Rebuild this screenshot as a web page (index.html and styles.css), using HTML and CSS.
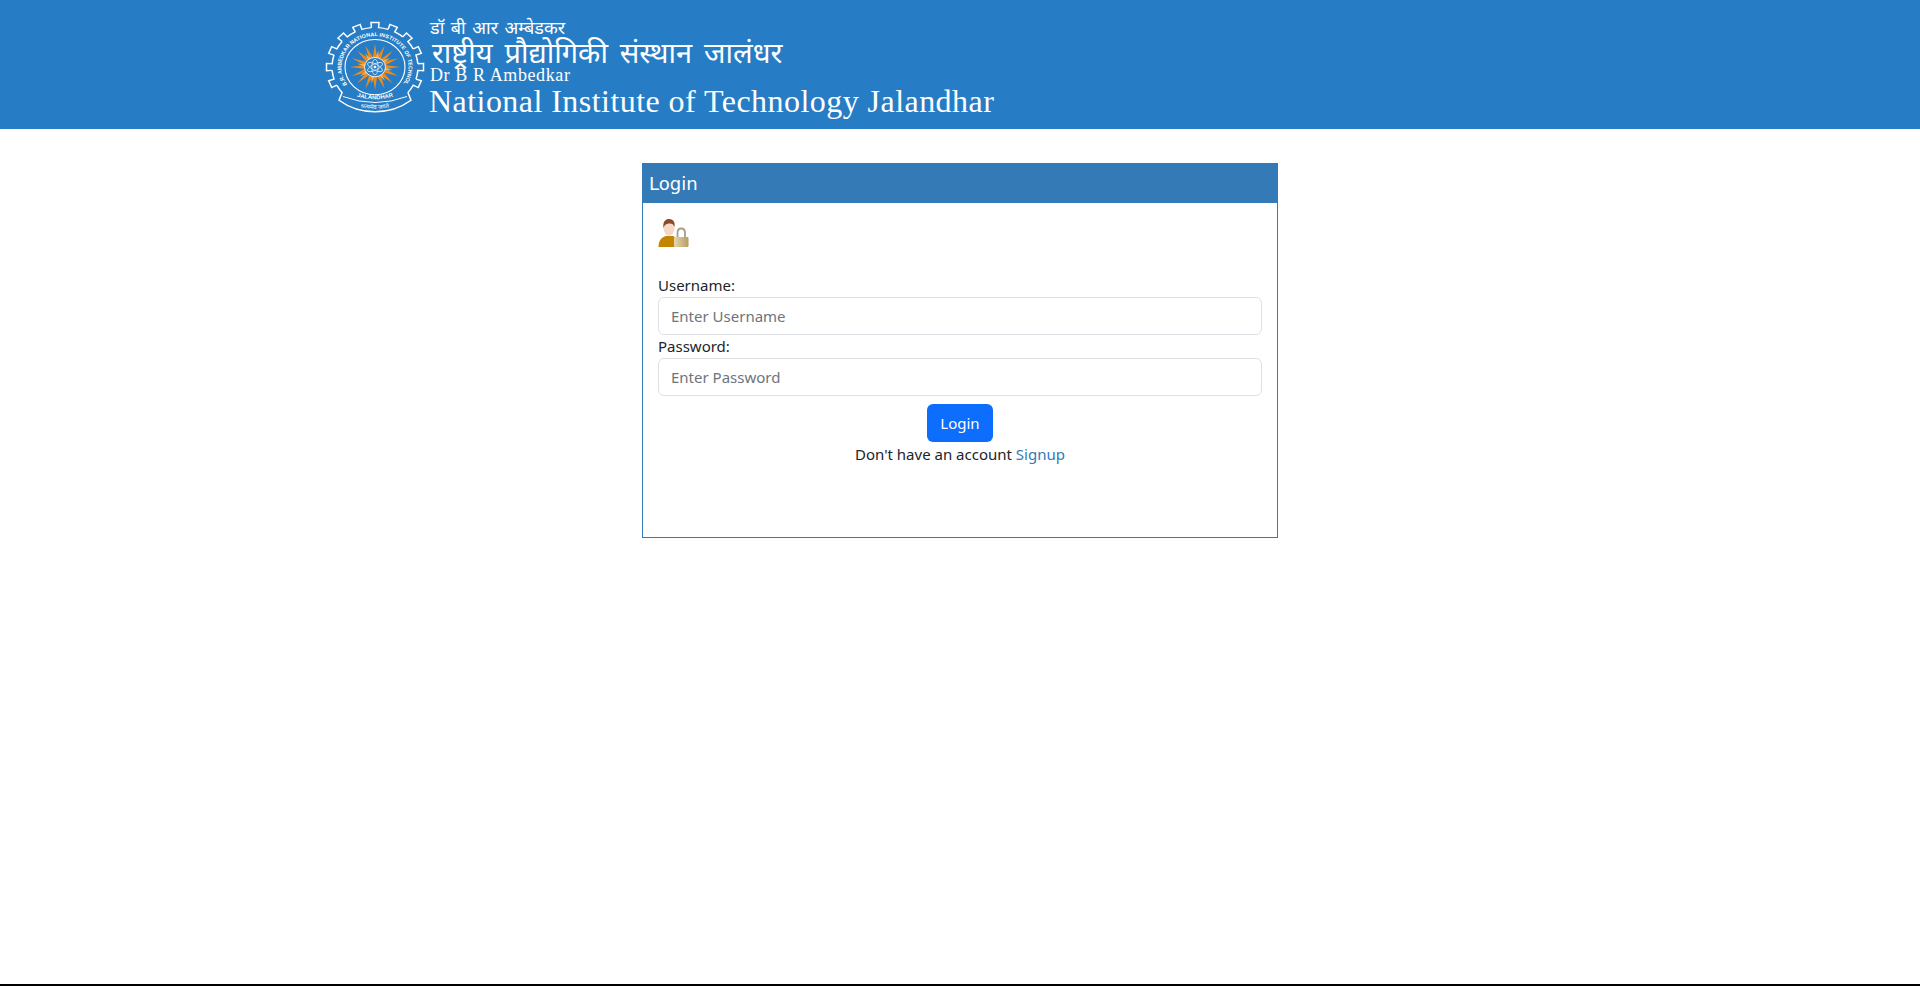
FILE: index.html
```html
<!DOCTYPE html>
<html lang="en">
  <head>
    <meta charset="UTF-8" />
    <meta name="viewport" content="width=device-width, initial-scale=1.0" />
    <title>Login</title>
    <link rel="stylesheet" href="styles.css">
  </head>
  <body>
    <header class="banner">
      <svg class="seal" viewBox="-50 -50 100 100" width="100" height="92" preserveAspectRatio="none" aria-hidden="true">
        <defs>
          <path id="tooth" d="M-3.6,-42.85 L-4,-48.5 L4,-48.5 L3.6,-42.85 A43,43 0 0 1 13.08,-40.96" fill="none" stroke="#fff" stroke-width="1.5" />
          <path id="ray" d="M0,-25 L2.2,-10 L-2.2,-10 Z" fill="#ee8a1c" />
          <path id="rayShort" d="M0,-18 L1.5,-10 L-1.5,-10 Z" fill="#f6b04a" />
          <path id="arcTop" d="M-27.5,19 A33.5,33.5 0 1 1 27.5,19" />
          <path id="arcCity" d="M-18,32 Q0,38 18,32" />
          <path id="arcHindi" d="M-27,39 Q0,52 27,39" />
        </defs>
        <g transform="translate(0,-1)">
          <use href="#tooth" transform="rotate(-112.5)" /><use href="#tooth" transform="rotate(-90)" /><use href="#tooth" transform="rotate(-67.5)" /><use href="#tooth" transform="rotate(-45)" />
          <use href="#tooth" transform="rotate(-22.5)" /><use href="#tooth" /><use href="#tooth" transform="rotate(22.5)" /><use href="#tooth" transform="rotate(45)" />
          <use href="#tooth" transform="rotate(67.5)" /><use href="#tooth" transform="rotate(90)" /><use href="#tooth" transform="rotate(112.5)" />
          <!-- ribbon at the foot of the gear -->
          <path d="M32.9,27.6 L36,36 A58,58 0 0 1 -36,36 L-32.9,27.6 A43,43 0 0 1 -38.2,19.7" fill="none" stroke="#fff" stroke-width="1.5" />
          <path d="M-32,32 Q0,45 32,32" fill="none" stroke="#fff" stroke-width="1" />
          <circle r="30" fill="none" stroke="#fff" stroke-width="1.1" />
          <text class="seal-text"><textPath href="#arcTop" startOffset="50%" text-anchor="middle">DR. B.R. AMBEDKAR NATIONAL INSTITUTE OF TECHNOLOGY</textPath></text>
          <text class="seal-city"><textPath href="#arcCity" startOffset="50%" text-anchor="middle">JALANDHAR</textPath></text>
          <text class="seal-hindi"><textPath href="#arcHindi" startOffset="50%" text-anchor="middle">सत्यमेव जयते</textPath></text>
          <use href="#ray" /><use href="#ray" transform="rotate(22.5)" /><use href="#ray" transform="rotate(45)" /><use href="#ray" transform="rotate(67.5)" />
          <use href="#ray" transform="rotate(90)" /><use href="#ray" transform="rotate(112.5)" /><use href="#ray" transform="rotate(135)" /><use href="#ray" transform="rotate(157.5)" />
          <use href="#ray" transform="rotate(180)" /><use href="#ray" transform="rotate(202.5)" /><use href="#ray" transform="rotate(225)" /><use href="#ray" transform="rotate(247.5)" />
          <use href="#ray" transform="rotate(270)" /><use href="#ray" transform="rotate(292.5)" /><use href="#ray" transform="rotate(315)" /><use href="#ray" transform="rotate(337.5)" />
          <use href="#rayShort" transform="rotate(11.25)" /><use href="#rayShort" transform="rotate(56.25)" /><use href="#rayShort" transform="rotate(101.25)" /><use href="#rayShort" transform="rotate(146.25)" />
          <use href="#rayShort" transform="rotate(191.25)" /><use href="#rayShort" transform="rotate(236.25)" /><use href="#rayShort" transform="rotate(281.25)" /><use href="#rayShort" transform="rotate(326.25)" />
          <circle r="10.5" fill="#2a7fc6" stroke="#e8eef2" stroke-width="1" />
          <g fill="none" stroke="#dcecf8" stroke-width="0.8">
            <ellipse rx="3.2" ry="8.4" />
            <ellipse rx="3.2" ry="8.4" transform="rotate(60)" />
            <ellipse rx="3.2" ry="8.4" transform="rotate(120)" />
          </g>
          <circle r="1.4" fill="#fff" />
        </g>
      </svg>
      <div class="brand">
        <div class="brand-hi-small">डॉ बी आर अम्बेडकर</div>
        <div class="brand-hi">राष्ट्रीय प्रौद्योगिकी संस्थान जालंधर</div>
        <div class="brand-en-small">Dr B R Ambedkar</div>
        <div class="brand-en">National Institute of Technology Jalandhar</div>
      </div>
    </header>

    <main class="content">
      <div class="card">
        <div class="card-head">Login</div>
        <form class="card-body" action="#">
          <svg class="user-icon" viewBox="0 0 31 30" width="31" height="30" aria-hidden="true">
            <defs>
              <linearGradient id="lockBody" x1="0" y1="0" x2="1" y2="0">
                <stop offset="0" stop-color="#e6d7ae" />
                <stop offset="1" stop-color="#b79c62" />
              </linearGradient>
            </defs>
            <path d="M0.5,29 C0.5,22 4,19 8,18 L15,18 C18,19 20,22 20,29 Z" fill="#c28600" />
            <ellipse cx="11" cy="10" rx="5.5" ry="7.8" fill="#f5d9c6" />
            <path d="M5.5,10 C4.5,3 8,1 11,1 C15,1 17.5,4 16.5,9 C15.5,6 13.5,5 10.5,5.5 C8,6 6.5,7 5.5,10 Z" fill="#8a4a2c" />
            <path d="M19.5,20 L19.5,15 C19.5,9 27,9 27,15 L27,20" fill="none" stroke="#a3a08c" stroke-width="1.8" />
            <rect x="16" y="19" width="14.5" height="10" rx="1" fill="url(#lockBody)" />
          </svg>
          <label class="field-label" for="username">Username:</label>
          <input class="field" type="text" id="username" name="username" placeholder="Enter Username" />
          <label class="field-label" for="password">Password:</label>
          <input class="field" type="password" id="password" name="password" placeholder="Enter Password" />
          <div class="actions">
            <button class="btn" type="submit">Login</button>
            <p class="signup">Don't have an account <a href="#">Signup</a></p>
          </div>
        </form>
      </div>
    </main>

    <footer class="bottom-line"></footer>
  </body>
</html>
```

FILE: styles.css
```css
* {
  box-sizing: border-box;
}
html,
body {
  height: 100%;
}
body {
  margin: 0;
  display: flex;
  flex-direction: column;
  background: #fff;
  color: #212529;
  font-family: "Noto Sans", "Open Sans", sans-serif;
  font-size: 15px;
}
.banner {
  height: 129px;
  background: #267dc5;
  display: flex;
  align-items: flex-start;
  gap: 4px;
  padding: 22px 0 0 325px;
  color: #fff;
}
.seal {
  flex: none;
  overflow: visible;
}
.seal-text {
  fill: #fff;
  font-family: "Liberation Sans", sans-serif;
  font-size: 5.6px;
  font-weight: 700;
}
.seal-city {
  fill: #fff;
  font-family: "Liberation Sans", sans-serif;
  font-size: 6px;
  font-weight: 700;
}
.seal-hindi {
  fill: #fff;
  font-family: "Noto Sans", sans-serif;
  font-size: 6px;
}
.brand {
  display: flex;
  flex-direction: column;
  margin-top: -4px;
}
.brand-hi-small {
  font-family: "Liberation Serif", "Noto Sans", serif;
  font-size: 18px;
  line-height: 21px;
  word-spacing: 2px;
  padding-left: 1px;
}
.brand-hi {
  font-family: "Liberation Serif", "Noto Sans", serif;
  font-size: 29px;
  line-height: 28px;
  word-spacing: 4.6px;
  padding-left: 3px;
}
.brand-en-small {
  font-family: "Liberation Serif", serif;
  font-size: 18px;
  line-height: 17px;
  letter-spacing: 0.6px;
  padding-left: 1px;
}
.brand-en {
  font-family: "Liberation Serif", serif;
  font-size: 32px;
  line-height: 34px;
  letter-spacing: 0.45px;
}
.content {
  flex: 1;
  padding-top: 34px;
}
.card {
  width: 636px;
  height: 375px;
  margin: 0 auto;
  border: 1px solid #337ab7;
}
.card-head {
  height: 39px;
  background: #337ab7;
  color: #fff;
  font-family: "DejaVu Sans", sans-serif;
  font-size: 18px;
  line-height: 39px;
  padding-left: 6px;
}
.card-body {
  display: flex;
  flex-direction: column;
  padding: 15px 15px 0;
}
.user-icon {
  display: block;
  margin-bottom: 26px;
}
.field-label {
  line-height: 23px;
}
.field {
  width: 100%;
  height: 38px;
  padding: 6px 12px;
  border: 1px solid #dee2e6;
  border-radius: 6px;
  font: inherit;
  font-size: 15px;
  color: #212529;
}
.field::placeholder {
  color: #6c757d;
}
.actions {
  display: flex;
  flex-direction: column;
  align-items: center;
  margin-top: 8px;
}
.btn {
  height: 38px;
  padding: 0 13px;
  border: none;
  border-radius: 6px;
  background: #0d6efd;
  color: #fff;
  font: inherit;
}
.signup {
  margin: 1px 0 0;
  line-height: 22px;
}
.signup a {
  color: #337ab7;
  text-decoration: none;
}
.bottom-line {
  height: 2px;
  background: #000;
}
```
